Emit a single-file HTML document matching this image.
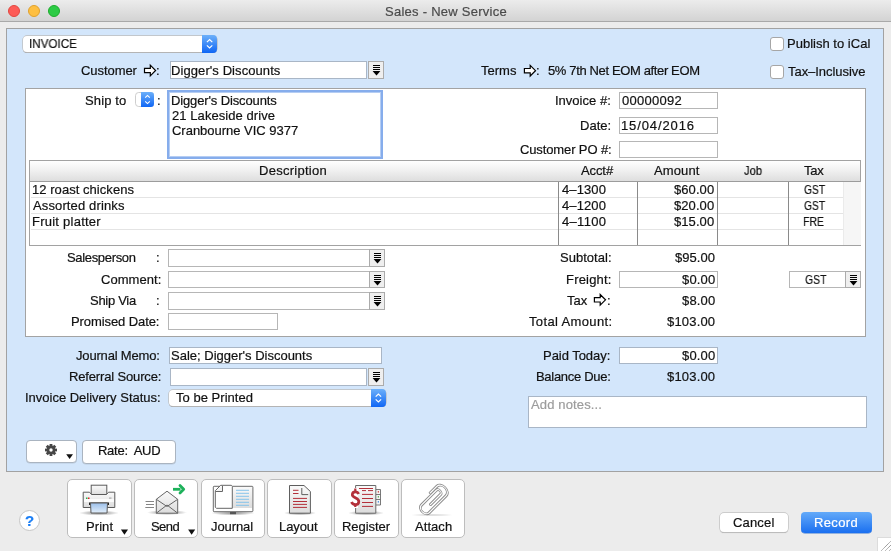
<!DOCTYPE html>
<html><head><meta charset="utf-8">
<style>
*{box-sizing:border-box;margin:0;padding:0}
html,body{width:891px;height:551px;overflow:hidden}
body{position:relative;background:#ececec;font-family:"Liberation Sans",sans-serif;font-size:13px;color:#111}
.a{position:absolute}
.tx{position:absolute;white-space:nowrap;line-height:15px;font-size:13px;will-change:transform;-webkit-text-stroke:0.2px}
#titlebar{left:0;top:0;width:891px;height:22px;background:linear-gradient(#ececec,#d3d3d3);border-bottom:1px solid #a9a9a9}
.dot{position:absolute;top:5px;width:12px;height:12px;border-radius:50%}
.inp{position:absolute;background:#fff;border:1px solid #b6b6b6}
.inpb{position:absolute;background:#fff;border:1px solid #a9b6c6}
.ddb{position:absolute;width:16px;background:#efefef;border:1px solid #ababab}
.chk{position:absolute;width:14px;height:14px;border:1px solid #a6a6a6;border-radius:3px;background:#fff}
.btn{position:absolute;background:#fff;border:1px solid #bdbdbd;border-radius:5px}
.rbtn{position:absolute;background:#fff;border:1px solid #aab4c0;border-radius:4px}
.hl{position:absolute;height:1px;background:#e4e4e4}
.vl{position:absolute;width:1px;background:#8a8a8a}
</style></head><body>
<div id="titlebar" class="a">
  <div class="dot" style="left:8px;background:#fd5b56;border:1px solid #e2463f"></div>
  <div class="dot" style="left:28px;background:#febf41;border:1px solid #e0a12c"></div>
  <div class="dot" style="left:48px;background:#2ccb45;border:1px solid #1dac2c"></div>
</div>
<div class="a" style="left:6px;top:28px;width:878px;height:444px;background:#d3e6fb;border:1px solid #a2a2a2"></div>

<!-- INVOICE popup -->
<div class="a" style="left:23px;top:36px;width:194px;height:16px;background:#fff;border-radius:4px;box-shadow:0 0 0 0.7px #bdbdbd,0 0.9px 0.5px #9a9a9a"></div>
<div class="a" style="left:202px;top:35px;width:15px;height:18px;background:linear-gradient(#6cb0fa,#0f66f5);border-radius:0 4px 4px 0"></div>
<svg class="a" style="left:202px;top:35px" width="15" height="18" viewBox="202 35 15 18"><path d="M206.9 42.1L209.6 39.6L212.3 42.1M206.9 45.4L209.6 47.9L212.3 45.4" fill="none" stroke="#fff" stroke-width="1.2"/></svg>

<div class="chk" style="left:770px;top:37px"></div>
<div class="chk" style="left:770px;top:65px"></div>

<!-- customer -->
<svg class="a" style="left:140px;top:60px" width="20" height="20" viewBox="140 60 20 20"><path d="M144.5 68.3H150.3V65.2L155.6 70.5L150.3 75.8V72.7H144.5Z" fill="#fff" stroke="#000" stroke-width="1.2"/></svg>
<div class="inpb" style="left:170px;top:61px;width:197px;height:18px"></div>
<div class="ddb" style="left:368px;top:61px;height:18px"><svg width="14" height="16" viewBox="0 0 14 16" style="position:absolute;left:0;top:0"><path d="M4 3h7v1h-7zM4 5h7v1h-7zM4 7h7v1h-7z" fill="#000"/><path d="M3.6 9H11.4L7.5 13.4Z" fill="#000"/></svg></div>

<svg class="a" style="left:520px;top:61px" width="20" height="20" viewBox="520 61 20 20"><path d="M524.4 68.5H530.2V65.4L535.5 70.7L530.2 76V72.9H524.4Z" fill="#fff" stroke="#000" stroke-width="1.2"/></svg>

<!-- white panel -->
<div class="a" style="left:25px;top:88px;width:841px;height:249px;background:#fff;border:1px solid #a3a3a3"></div>

<!-- ship to stepper -->
<svg class="a" style="left:134px;top:91px" width="22" height="18" viewBox="134 91 22 18">
<defs><linearGradient id="bg1" x1="0" y1="0" x2="0" y2="1"><stop offset="0" stop-color="#6cb0fa"/><stop offset="1" stop-color="#0f66f5"/></linearGradient></defs>
<rect x="135.5" y="92.5" width="18" height="14" rx="3.2" fill="#fff" stroke="#c8c8c8" stroke-width="0.9"/>
<path d="M141 92H150.8A3.2 3.2 0 0 1 154 95.2V103.8A3.2 3.2 0 0 1 150.8 107H141Z" fill="url(#bg1)"/>
<path d="M145.2 97.6L147.5 95.4L149.8 97.6M145.2 101.4L147.5 103.6L149.8 101.4" fill="none" stroke="#fff" stroke-width="1.1"/>
</svg>
<!-- address textarea -->
<div class="a" style="left:167px;top:90px;width:216px;height:69px;background:#fff;border:2px solid #86adec;box-shadow:inset 0 0 0 1px #b5cdf3"></div>

<div class="inp" style="left:619px;top:92px;width:99px;height:17px"></div>
<div class="inp" style="left:619px;top:117px;width:99px;height:17px"></div>
<div class="inp" style="left:619px;top:141px;width:99px;height:17px"></div>

<!-- table -->
<div class="a" style="left:29px;top:160px;width:832px;height:86px;background:#fff;border:1px solid #a2a2a2;border-right:0"></div>
<div class="a" style="left:30px;top:160px;width:831px;height:22px;background:linear-gradient(#ffffff,#f3f3f3 40%,#dedede);border-top:1px solid #a2a2a2;border-right:1px solid #a2a2a2;border-bottom:1px solid #9c9c9c"></div>
<div class="a" style="left:843px;top:182px;width:18px;height:63px;background:#f6f6f6;border-left:1px solid #ebebeb"></div>
<div class="hl" style="left:31px;top:197px;width:812px"></div>
<div class="hl" style="left:31px;top:213px;width:812px"></div>
<div class="hl" style="left:31px;top:229px;width:812px"></div>
<div class="vl" style="left:558px;top:182px;height:63px"></div>
<div class="vl" style="left:637px;top:182px;height:63px"></div>
<div class="vl" style="left:717px;top:182px;height:63px"></div>
<div class="vl" style="left:788px;top:182px;height:63px"></div>

<!-- lower white fields -->
<div class="inp" style="left:168px;top:249px;width:202px;height:18px"></div>
<div class="ddb" style="left:369px;top:249px;height:18px"><svg width="14" height="16" viewBox="0 0 14 16" style="position:absolute;left:0;top:0"><path d="M4 3h7v1h-7zM4 5h7v1h-7zM4 7h7v1h-7z" fill="#000"/><path d="M3.6 9H11.4L7.5 13.4Z" fill="#000"/></svg></div>
<div class="inp" style="left:168px;top:271px;width:202px;height:17px"></div>
<div class="ddb" style="left:369px;top:271px;height:17px"><svg width="14" height="16" viewBox="0 0 14 16" style="position:absolute;left:0;top:0"><path d="M4 3h7v1h-7zM4 5h7v1h-7zM4 7h7v1h-7z" fill="#000"/><path d="M3.6 9H11.4L7.5 13.4Z" fill="#000"/></svg></div>
<div class="inp" style="left:168px;top:292px;width:202px;height:18px"></div>
<div class="ddb" style="left:369px;top:292px;height:18px"><svg width="14" height="16" viewBox="0 0 14 16" style="position:absolute;left:0;top:0"><path d="M4 3h7v1h-7zM4 5h7v1h-7zM4 7h7v1h-7z" fill="#000"/><path d="M3.6 9H11.4L7.5 13.4Z" fill="#000"/></svg></div>
<div class="inp" style="left:168px;top:313px;width:110px;height:17px"></div>

<div class="inp" style="left:619px;top:271px;width:99px;height:17px"></div>
<svg class="a" style="left:590px;top:290px" width="20" height="20" viewBox="590 290 20 20"><path d="M594.4 297.6H600.2V294.5L605.5 299.8L600.2 305.1V302H594.4Z" fill="#fff" stroke="#000" stroke-width="1.2"/></svg>
<div class="inp" style="left:789px;top:271px;width:57px;height:17px"></div>
<div class="ddb" style="left:845px;top:271px;height:17px"><svg width="14" height="16" viewBox="0 0 14 16" style="position:absolute;left:0;top:0"><path d="M4 3h7v1h-7zM4 5h7v1h-7zM4 7h7v1h-7z" fill="#000"/><path d="M3.6 9H11.4L7.5 13.4Z" fill="#000"/></svg></div>

<!-- blue lower -->
<div class="inpb" style="left:169px;top:347px;width:213px;height:17px"></div>
<div class="inpb" style="left:170px;top:368px;width:197px;height:18px"></div>
<div class="ddb" style="left:368px;top:368px;height:18px"><svg width="14" height="16" viewBox="0 0 14 16" style="position:absolute;left:0;top:0"><path d="M4 3h7v1h-7zM4 5h7v1h-7zM4 7h7v1h-7z" fill="#000"/><path d="M3.6 9H11.4L7.5 13.4Z" fill="#000"/></svg></div>
<div class="a" style="left:169px;top:390px;width:217px;height:16px;background:#fff;border-radius:4px;box-shadow:0 0 0 0.7px #bdbdbd,0 0.9px 0.5px #9a9a9a"></div>
<div class="a" style="left:371px;top:389px;width:15px;height:18px;background:linear-gradient(#6cb0fa,#0f66f5);border-radius:0 4px 4px 0"></div>
<svg class="a" style="left:371px;top:389px" width="15" height="18" viewBox="371 389 15 18"><path d="M375.7 396.6L378.4 394.1L381.1 396.6M375.7 399.4L378.4 401.9L381.1 399.4" fill="none" stroke="#fff" stroke-width="1.2"/></svg>

<div class="inpb" style="left:619px;top:347px;width:99px;height:17px"></div>
<div class="inpb" style="left:528px;top:396px;width:339px;height:32px"></div>

<div class="rbtn" style="left:26px;top:440px;width:51px;height:23px;box-shadow:0 0.5px 0.5px rgba(0,0,0,0.12)"></div>
<div class="rbtn" style="left:82px;top:440px;width:94px;height:24px;box-shadow:0 0.5px 0.5px rgba(0,0,0,0.12)"></div>
<svg class="a" style="left:43px;top:442px" width="16" height="16" viewBox="-8 -8 16 16">
<g fill="#464646"><circle r="4.4"/>
<rect x="-1.4" y="-6" width="2.8" height="12"/><rect x="-1.4" y="-6" width="2.8" height="12" transform="rotate(45)"/><rect x="-1.4" y="-6" width="2.8" height="12" transform="rotate(90)"/><rect x="-1.4" y="-6" width="2.8" height="12" transform="rotate(135)"/></g>
<circle r="1.7" fill="#fff"/></svg>
<svg class="a" style="left:64px;top:452px" width="12" height="10" viewBox="64 452 12 10"><path d="M66.2 454.2H73L69.6 459Z" fill="#111"/></svg>

<!-- toolbar buttons -->
<div class="btn" style="left:67px;top:479px;width:65px;height:59px"></div>
<div class="btn" style="left:134px;top:479px;width:64px;height:59px"></div>
<div class="btn" style="left:201px;top:479px;width:64px;height:59px"></div>
<div class="btn" style="left:267px;top:479px;width:65px;height:59px"></div>
<div class="btn" style="left:334px;top:479px;width:65px;height:59px"></div>
<div class="btn" style="left:401px;top:479px;width:64px;height:59px"></div>
<svg class="a" style="left:119px;top:527px" width="12" height="10" viewBox="119 527 12 10"><path d="M120.9 529.6H128L124.45 534.8Z" fill="#111"/></svg>
<svg class="a" style="left:186px;top:527px" width="12" height="10" viewBox="186 527 12 10"><path d="M188.1 529.6H195.2L191.65 534.8Z" fill="#111"/></svg>


<!-- toolbar icons -->
<svg class="a" style="left:68px;top:479px" width="64" height="40" viewBox="68 479 64 40">
<defs>
<radialGradient id="shd" cx="0.5" cy="0.5" r="0.5"><stop offset="0" stop-color="#000" stop-opacity="0.45"/><stop offset="0.6" stop-color="#000" stop-opacity="0.2"/><stop offset="1" stop-color="#000" stop-opacity="0"/></radialGradient>
<linearGradient id="gpap" x1="0" y1="0" x2="0" y2="1"><stop offset="0" stop-color="#fafafa"/><stop offset="1" stop-color="#dcdcdc"/></linearGradient>
<linearGradient id="gblue" x1="0" y1="0" x2="0" y2="1"><stop offset="0" stop-color="#9bbfea"/><stop offset="1" stop-color="#e2eefa"/></linearGradient>
</defs>
<ellipse cx="99" cy="513" rx="20" ry="2.6" fill="url(#shd)"/>
<rect x="91.2" y="485.2" width="15.6" height="10" fill="url(#gpap)" stroke="#5a5a5a" stroke-width="1"/>
<path d="M83.2 492.2H89.5L91.5 494.5H106.5L108.5 492.2H114.8V507.5H83.2Z" fill="url(#gpap)" stroke="#5a5a5a" stroke-width="1"/>
<rect x="84" y="499" width="30" height="3" fill="#fff" opacity="0.8"/>
<rect x="89" y="502.5" width="20" height="2.5" fill="#222"/>
<path d="M90.5 503H107.5L107 513H91Z" fill="url(#gblue)" stroke="#5a5a5a" stroke-width="1"/>
<rect x="86" y="497.5" width="1.5" height="1.5" fill="#2ab04a"/><rect x="88" y="497.5" width="1.5" height="1.5" fill="#e02020"/>
<rect x="109" y="497.5" width="2.5" height="1.2" fill="#aaa"/>
</svg>
<svg class="a" style="left:134px;top:479px" width="64" height="40" viewBox="134 479 64 40">
<ellipse cx="167" cy="512.5" rx="20" ry="2.6" fill="url(#shd)"/>
<path d="M156.3 499.3L167 491.2L177.7 499.3V513.2H156.3Z" fill="url(#gpap)" stroke="#666" stroke-width="1"/>
<path d="M156.3 499.3L167 506.5L177.7 499.3M156.3 513.2L167 505L177.7 513.2" fill="none" stroke="#666" stroke-width="1"/>
<path d="M145.5 501.5H154M146 504.5H154M145.3 507.5H154" stroke="#777" stroke-width="0.9"/>
<path d="M173 489.3H180.5" stroke="#1db15a" stroke-width="2.8"/>
<path d="M180 485.6L183.7 489.3L180 493" fill="none" stroke="#1db15a" stroke-width="2.8" stroke-linecap="round" stroke-linejoin="round"/>
</svg>
<svg class="a" style="left:201px;top:479px" width="64" height="40" viewBox="201 479 64 40">
<ellipse cx="233" cy="513" rx="22" ry="2.5" fill="url(#shd)"/>
<rect x="213.3" y="486.3" width="39.6" height="25.4" rx="0.8" fill="#fff" stroke="#6a6a6a" stroke-width="1"/>
<rect x="233" y="487" width="19" height="21" fill="url(#gpap)"/>
<path d="M220.7 485.3H231.3L232.3 486.3V508.3H216.5L215.3 507.3V490.7Z" fill="#fff" stroke="#666" stroke-width="1"/>
<path d="M215.3 491.5H222.5V485.8" fill="#f2f2f2" stroke="#666" stroke-width="1"/>
<path d="M236 490.3H249M236 493.3H249M236 496.3H249M236 499.3H249M236 502.3H249M236 505.3H249" stroke="#7ac0ea" stroke-width="0.9"/>
<rect x="230" y="512" width="6" height="2.2" fill="#555"/>
</svg>
<svg class="a" style="left:267px;top:479px" width="65" height="40" viewBox="267 479 65 40">
<ellipse cx="300" cy="513" rx="16" ry="2.5" fill="url(#shd)"/>
<path d="M289.5 485.5H304L310.4 491.5V513.2H289.5Z" fill="url(#gpap)" stroke="#5e5e5e" stroke-width="1"/>
<path d="M301.8 488V494.6H308.2" fill="none" stroke="#5e5e5e" stroke-width="1"/>
<path d="M293 490.3H298.5M293 493.5H298.5M293 498.4H307M293 501.5H307M293 504.4H307M293 507.4H307" stroke="#b3303a" stroke-width="1"/>
</svg>
<svg class="a" style="left:334px;top:479px" width="65" height="40" viewBox="334 479 65 40">
<ellipse cx="366" cy="513" rx="18" ry="2.5" fill="url(#shd)"/>
<path d="M376 489.5H380.5V505H376" fill="#f4f4f4" stroke="#6a6a6a" stroke-width="0.9"/>
<path d="M376 494.5H380.5M376 499.5H380.5" stroke="#6a6a6a" stroke-width="0.9"/>
<rect x="377.8" y="491" width="1" height="1.6" fill="#c33"/><rect x="377.8" y="496" width="1" height="1.6" fill="#4a4"/><rect x="377.8" y="501" width="1" height="1.6" fill="#38d"/>
<path d="M355.6 485.5H375.8V513.2H355.6Z" fill="url(#gpap)" stroke="#6a6a6a" stroke-width="1"/>
<path d="M359 488.5H373M362 490.6H366M368 490.6H373M362 494.4H373M362 498.5H373M362 502.5H373M362 506.4H373" stroke="#b3303a" stroke-width="1"/>
<rect x="349" y="488" width="9" height="20" fill="#fff"/>
<path d="M358.6 494C358 492.4 356.7 491.8 355.3 491.8C353.4 491.8 352.3 493 352.3 494.8C352.3 497.9 358.8 497.7 358.8 501.4C358.8 503.6 357.3 504.6 355.3 504.6C353.5 504.6 352.2 503.8 351.5 502" fill="none" stroke="#b3303a" stroke-width="2.7"/><path d="M355.3 488.6V491.5M355.3 504.5V507" stroke="#b3303a" stroke-width="2.2"/>
</svg>
<svg class="a" style="left:401px;top:479px" width="64" height="40" viewBox="401 479 64 40">
<ellipse cx="432" cy="515" rx="22" ry="1.5" fill="url(#shd)" opacity="0.4"/>
<g transform="translate(432.3 500.2) rotate(45) scale(-1.2 0.9)" fill="none" stroke-linecap="round">
<path d="M-1.5 5V-11A2.5 2.5 0 0 1 3.5 -11V12.5A4.5 4.5 0 0 1 -5.5 12.5V-14.5A5.5 5.5 0 0 1 5.5 -14.5V-4" stroke="#8c8c8c" stroke-width="2.6"/>
<path d="M-1.5 5V-11A2.5 2.5 0 0 1 3.5 -11V12.5A4.5 4.5 0 0 1 -5.5 12.5V-14.5A5.5 5.5 0 0 1 5.5 -14.5V-4" stroke="#fff" stroke-width="1.0"/>
</g>
</svg>

<div class="a" style="left:19px;top:510px;width:21px;height:21px;border-radius:50%;background:#fff;border:1px solid #c6c6c6"></div>

<div class="a" style="left:720px;top:513px;width:68px;height:19px;background:#fff;border-radius:4px;box-shadow:0 0 0 0.7px #c2c2c2,0 0.9px 0.7px #a8a8a8"></div>
<div class="a" style="left:877px;top:537px;width:14px;height:14px;background:#fff;border-top:1px solid #dcdcdc;border-left:1px solid #dcdcdc"></div>
<svg class="a" style="left:877px;top:537px" width="14" height="14" viewBox="877 537 14 14"><path d="M880.5 551.5L891.5 540.5M884.5 551.5L891.5 544.5M888.5 551.5L891.5 548.5" stroke="#777" stroke-width="1" stroke-dasharray="1 0.6"/></svg>
<div class="a" style="left:801px;top:512px;width:71px;height:21px;background:linear-gradient(#63aaf9,#1a6ff0);border-radius:4px;box-shadow:0 0.5px 0.5px #3a78d0"></div>

<div id="title" class="tx" style="left:384.60px;top:4px;letter-spacing:0.261px;color:#4a4a4a">Sales - New Service</div>
<div id="invoice" class="tx" style="left:29.00px;top:37px;transform-origin:0 0;transform:scaleX(0.9712);font-size:12px">INVOICE</div>
<div id="pub" class="tx" style="left:787.20px;top:36px;letter-spacing:0.014px;">Publish to iCal</div>
<div id="taxinc" class="tx" style="left:788.20px;top:64px;letter-spacing:-0.050px;">Tax–Inclusive</div>
<div id="cust" class="tx" style="left:81.20px;top:63px;letter-spacing:-0.057px;">Customer</div>
<div id="custc" class="tx" style="left:156.00px;top:63px;letter-spacing:0.000px;">:</div>
<div id="custv" class="tx" style="left:170.80px;top:63px;letter-spacing:0.082px;">Digger's Discounts</div>
<div id="terms" class="tx" style="left:481.40px;top:63px;letter-spacing:0.000px;">Terms</div>
<div id="termsc" class="tx" style="left:536.00px;top:63px;letter-spacing:0.000px;">:</div>
<div id="termsv" class="tx" style="left:547.60px;top:63px;letter-spacing:-0.365px;">5% 7th Net EOM after EOM</div>
<div id="shipto" class="tx" style="left:85.40px;top:93px;letter-spacing:0.133px;">Ship to</div>
<div id="shiptoc" class="tx" style="left:156.60px;top:93px;letter-spacing:0.000px;">:</div>
<div id="addr1" class="tx" style="left:170.80px;top:93px;letter-spacing:-0.129px;">Digger's Discounts</div>
<div id="addr2" class="tx" style="left:171.80px;top:108px;letter-spacing:0.069px;">21 Lakeside drive</div>
<div id="addr3" class="tx" style="left:171.80px;top:123px;letter-spacing:-0.017px;">Cranbourne VIC 9377</div>
<div id="invno" class="tx" style="left:555.00px;top:93px;letter-spacing:0.011px;">Invoice #:</div>
<div id="invnov" class="tx" style="left:622.40px;top:93px;letter-spacing:0.271px;">00000092</div>
<div id="date" class="tx" style="left:580.00px;top:118px;letter-spacing:0.025px;">Date:</div>
<div id="datev" class="tx" style="left:621.40px;top:118px;letter-spacing:0.889px;">15/04/2016</div>
<div id="po" class="tx" style="left:520.40px;top:142px;letter-spacing:-0.123px;">Customer PO #:</div>
<div id="hdesc" class="tx" style="left:259.00px;top:163px;letter-spacing:0.270px;">Description</div>
<div id="hacct" class="tx" style="left:580.80px;top:163px;letter-spacing:-0.100px;">Acct#</div>
<div id="hamt" class="tx" style="left:653.60px;top:163px;letter-spacing:0.120px;">Amount</div>
<div id="hjob" class="tx" style="left:743.60px;top:163px;transform-origin:0 0;transform:scaleX(0.8608);">Job</div>
<div id="htax" class="tx" style="left:804.00px;top:163px;letter-spacing:-0.200px;">Tax</div>
<div id="d1" class="tx" style="left:32.40px;top:182px;letter-spacing:0.050px;">12 roast chickens</div>
<div id="d2" class="tx" style="left:33.40px;top:198px;letter-spacing:0.129px;">Assorted drinks</div>
<div id="d3" class="tx" style="left:32.40px;top:214px;letter-spacing:0.242px;">Fruit platter</div>
<div id="a1" class="tx" style="left:562.00px;top:182px;letter-spacing:0.100px;">4–1300</div>
<div id="a2" class="tx" style="left:562.00px;top:198px;letter-spacing:0.100px;">4–1200</div>
<div id="a3" class="tx" style="left:562.00px;top:214px;letter-spacing:0.300px;">4–1100</div>
<div id="m1" class="tx" style="left:674.20px;top:182px;letter-spacing:0.080px;">$60.00</div>
<div id="m2" class="tx" style="left:674.20px;top:198px;letter-spacing:0.080px;">$20.00</div>
<div id="m3" class="tx" style="left:674.20px;top:214px;letter-spacing:0.080px;">$15.00</div>
<div id="x1" class="tx" style="left:803.60px;top:182px;transform-origin:0 0;transform:scaleX(0.7932);">GST</div>
<div id="x2" class="tx" style="left:803.60px;top:198px;transform-origin:0 0;transform:scaleX(0.7932);">GST</div>
<div id="x3" class="tx" style="left:803.40px;top:214px;transform-origin:0 0;transform:scaleX(0.8076);">FRE</div>
<div id="sales" class="tx" style="left:67.00px;top:250px;letter-spacing:-0.330px;">Salesperson</div>
<div id="salesc" class="tx" style="left:156.00px;top:250px;letter-spacing:0.000px;">:</div>
<div id="comm" class="tx" style="left:100.60px;top:272px;letter-spacing:0.043px;">Comment:</div>
<div id="via" class="tx" style="left:90.00px;top:293px;letter-spacing:-0.286px;">Ship Via</div>
<div id="viac" class="tx" style="left:156.00px;top:293px;letter-spacing:0.000px;">:</div>
<div id="prom" class="tx" style="left:71.40px;top:314px;letter-spacing:-0.085px;">Promised Date:</div>
<div id="subt" class="tx" style="left:559.80px;top:250px;letter-spacing:0.025px;">Subtotal:</div>
<div id="frt" class="tx" style="left:566.40px;top:272px;letter-spacing:0.200px;">Freight:</div>
<div id="tax" class="tx" style="left:567.40px;top:293px;letter-spacing:0.000px;">Tax</div>
<div id="taxc" class="tx" style="left:606.60px;top:293px;letter-spacing:0.000px;">:</div>
<div id="tot" class="tx" style="left:528.60px;top:314px;letter-spacing:0.358px;">Total Amount:</div>
<div id="subtv" class="tx" style="left:674.80px;top:250px;letter-spacing:0.020px;">$95.00</div>
<div id="frtv" class="tx" style="left:681.80px;top:272px;letter-spacing:0.150px;">$0.00</div>
<div id="taxv" class="tx" style="left:681.80px;top:293px;letter-spacing:0.150px;">$8.00</div>
<div id="totv" class="tx" style="left:666.80px;top:314px;letter-spacing:0.183px;">$103.00</div>
<div id="gst" class="tx" style="left:805.00px;top:272px;transform-origin:0 0;transform:scaleX(0.8052);">GST</div>
<div id="jm" class="tx" style="left:76.40px;top:348px;letter-spacing:-0.175px;">Journal Memo:</div>
<div id="jmv" class="tx" style="left:170.80px;top:348px;letter-spacing:0.000px;">Sale; Digger's Discounts</div>
<div id="ref" class="tx" style="left:68.60px;top:369px;letter-spacing:-0.153px;">Referral Source:</div>
<div id="ids" class="tx" style="left:25.40px;top:390px;letter-spacing:-0.009px;">Invoice Delivery Status:</div>
<div id="idsv" class="tx" style="left:176.40px;top:390px;letter-spacing:0.033px;">To be Printed</div>
<div id="paid" class="tx" style="left:543.40px;top:348px;letter-spacing:-0.040px;">Paid Today:</div>
<div id="paidv" class="tx" style="left:681.80px;top:348px;letter-spacing:0.150px;">$0.00</div>
<div id="bal" class="tx" style="left:536.20px;top:369px;letter-spacing:-0.300px;">Balance Due:</div>
<div id="balv" class="tx" style="left:666.80px;top:369px;letter-spacing:0.183px;">$103.00</div>
<div id="notes" class="tx" style="left:530.80px;top:397px;letter-spacing:0.136px;color:#9c9c9c">Add notes...</div>
<div id="rate" class="tx" style="left:97.80px;top:443px;letter-spacing:-0.267px;">Rate:&nbsp; AUD</div>
<div id="print" class="tx" style="left:85.60px;top:519px;letter-spacing:0.075px;">Print</div>
<div id="send" class="tx" style="left:151.00px;top:519px;letter-spacing:-0.567px;">Send</div>
<div id="journal" class="tx" style="left:211.40px;top:519px;letter-spacing:-0.083px;">Journal</div>
<div id="layout" class="tx" style="left:279.20px;top:519px;letter-spacing:-0.080px;">Layout</div>
<div id="register" class="tx" style="left:342.00px;top:519px;letter-spacing:-0.043px;">Register</div>
<div id="attach" class="tx" style="left:414.80px;top:519px;letter-spacing:0.060px;">Attach</div>
<div id="cancel" class="tx" style="left:733.00px;top:515px;letter-spacing:0.160px;">Cancel</div>
<div id="record" class="tx" style="left:814.00px;top:515px;letter-spacing:0.360px;color:#fff">Record</div>
<div id="help" class="tx" style="left:25.00px;top:513px;letter-spacing:0.000px;color:#1a7ef5;font-size:15px;font-weight:bold">?</div>
</body></html>
